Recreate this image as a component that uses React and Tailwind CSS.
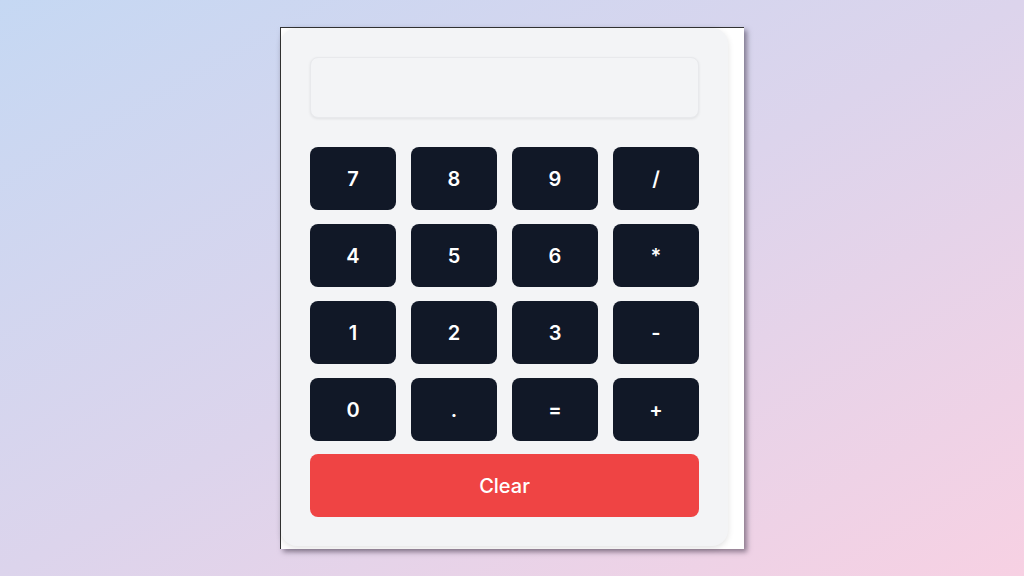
export default function App() {
  const keys = ["7", "8", "9", "/", "4", "5", "6", "*", "1", "2", "3", "-", "0", ".", "=", "+"];

  return (
    <div
      className="min-h-screen w-full flex items-center justify-center bg-gradient-to-br from-[#c5d8f3] via-[#dcd4ec] to-[#f7d1e3]"
      style={{ fontFamily: "Inter, 'Noto Sans', sans-serif" }}
    >
      {/* window frame */}
      <div className="w-[464px] h-[522px] bg-white border-l border-t border-[#333333] shadow-[3px_3px_5px_rgba(60,50,70,0.55)] flex items-start">
        {/* calculator card */}
        <div className="w-[447px] h-[518px] bg-[#f3f4f6] rounded-2xl shadow-[0_2px_6px_rgba(0,0,0,0.12)] px-[29px] pt-[29px] flex flex-col">
          <div className="h-[61px] w-full rounded-lg bg-[#f3f4f6] border border-[#e8e9ec] shadow-[0_1px_3px_rgba(0,0,0,0.08)]"></div>

          <div className="grid grid-cols-4 gap-x-[15px] gap-y-[14px] mt-[29px]">
            {keys.map((k) => (
              <button
                key={k}
                className="h-[63px] rounded-lg bg-[#111827] text-white text-xl font-semibold flex items-center justify-center"
              >
                {k}
              </button>
            ))}
          </div>

          <button className="mt-[13px] h-[63px] w-full rounded-lg bg-[#ef4444] text-white text-xl font-medium">
            Clear
          </button>
        </div>
      </div>
    </div>
  );
}
